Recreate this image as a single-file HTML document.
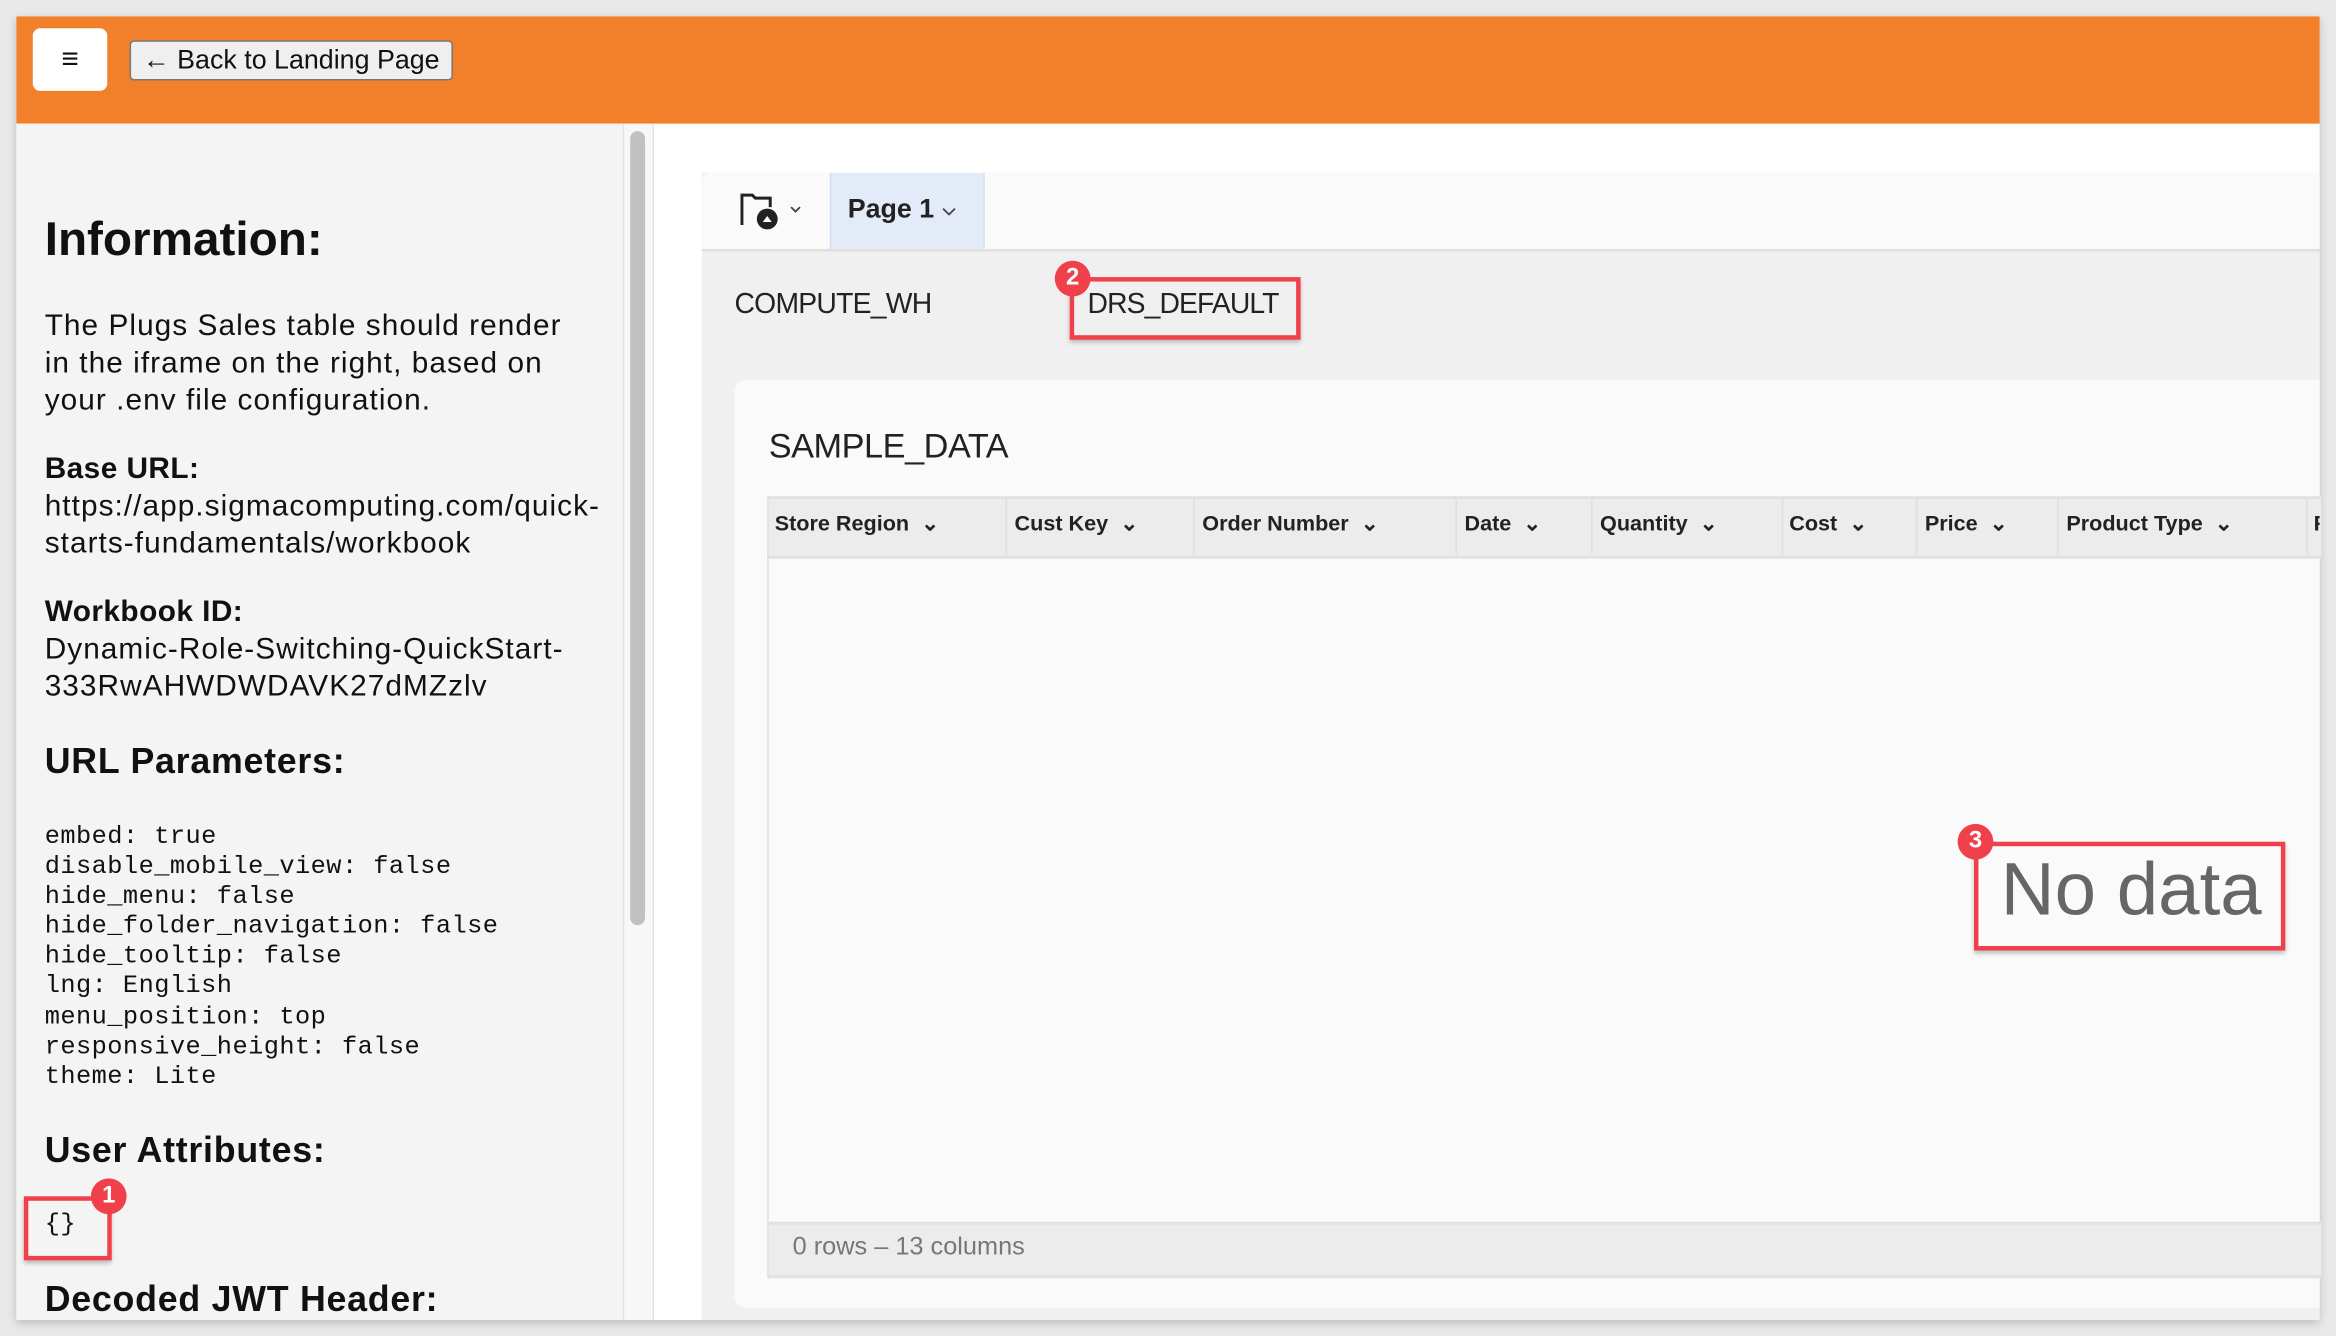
<!DOCTYPE html>
<html><head><meta charset="utf-8"><style>
html,body{margin:0;padding:0;width:2336px;height:1336px;overflow:hidden;background:#e9e9e9;}
#w{position:absolute;left:0;top:0;width:1568px;height:897px;transform:scale(1.4898);transform-origin:0 0;font-family:"Liberation Sans",sans-serif;color:#111;}
.a{position:absolute;white-space:nowrap;}
.mono{font-family:"Liberation Mono",monospace;font-size:17px;line-height:20.1px;letter-spacing:0.3px;}
.h{font-weight:bold;letter-spacing:0.5px;}
.p{font-size:20px;line-height:25px;letter-spacing:0.7px;}
.p b{letter-spacing:0.3px;}
.col{position:absolute;top:333px;height:39px;line-height:39px;font-size:14.5px;font-weight:bold;color:#222;}
.dv{position:absolute;top:334px;width:1px;height:38px;background:#dedede;}
.rb{position:absolute;border:3px solid #f0404c;box-shadow:0 2px 3px rgba(0,0,0,.25);}
.bd{position:absolute;width:24px;height:24px;border-radius:50%;background:#f0404c;color:#fff;font-weight:bold;font-size:16px;text-align:center;line-height:24px;}
</style></head><body><div id="w">
<div class="a" style="left:11px;top:11px;width:1546px;height:875px;background:#fff;box-shadow:0 2px 6px rgba(0,0,0,.2)"></div>
<div class="a" style="left:11px;top:11px;width:1546px;height:72px;background:#f2802a"></div>
<div class="a" style="left:22px;top:19px;width:50px;height:42px;background:#fff;border-radius:5px;text-align:center;line-height:42px;font-size:20px;font-weight:bold">≡</div>
<div class="a" style="left:87px;top:27px;width:217px;height:27px;background:#efefef;border:1px solid #777;border-radius:3px;box-sizing:border-box;font-size:18px;line-height:25px;text-align:center">← Back to Landing Page</div>
<div class="a" style="left:11px;top:83px;width:407px;height:803px;background:#f4f4f4"></div>
<div class="a" style="left:418px;top:83px;width:19px;height:803px;background:#f7f7f7;border-left:1px solid #e4e4e4;border-right:1px solid #e4e4e4"></div>
<div class="a" style="left:423px;top:88px;width:10px;height:533px;background:#c1c1c1;border-radius:5px"></div>
<div class="a h" style="left:30px;top:142px;font-size:32px;letter-spacing:0">Information:</div>
<div class="a p" style="left:30px;top:207px">The Plugs Sales table should render<br>in the iframe on the right, based on<br>your .env file configuration.</div>
<div class="a p" style="left:30px;top:303px"><b>Base URL:</b><br>https://app.sigmacomputing.com/quick-<br>starts-fundamentals/workbook</div>
<div class="a p" style="left:30px;top:399px"><b>Workbook ID:</b><br>Dynamic-Role-Switching-QuickStart-<br>333RwAHWDWDAVK27dMZzlv</div>
<div class="a h" style="left:30px;top:498px;font-size:24px">URL Parameters:</div>
<div class="a mono" style="left:30px;top:553px">embed: true<br>disable_mobile_view: false<br>hide_menu: false<br>hide_folder_navigation: false<br>hide_tooltip: false<br>lng: English<br>menu_position: top<br>responsive_height: false<br>theme: Lite</div>
<div class="a h" style="left:30px;top:759px;font-size:24px">User Attributes:</div>
<div class="a mono" style="left:30px;top:813px">{}</div>
<div class="rb" style="left:16px;top:803px;width:53px;height:37px"></div>
<div class="bd" style="left:61px;top:791px">1</div>
<div class="a h" style="left:30px;top:859px;font-size:24px;height:27px;overflow:hidden">Decoded JWT Header:</div>
<div class="a" style="left:471px;top:116px;width:1086px;height:770px;background:#f0f0f0"></div>
<div class="a" style="left:471px;top:116px;width:1086px;height:51px;background:#fafafa;border-bottom:2px solid #e0e0e0;border-radius:6px 0 0 0"></div>
<div class="a" style="left:557px;top:116px;width:102px;height:51px;background:#e3ebf9;border-left:1px solid #d6def0;border-right:1px solid #d6def0"></div>
<svg class="a" style="left:497px;top:129px" width="44" height="26" viewBox="0 0 44 26"><path d="M1 22V2h7l2 2h10v6" fill="none" stroke="#222" stroke-width="2"/><circle cx="18" cy="18" r="7" fill="#222"/><path d="M15 20l3-4 3 4z" fill="#fff"/><path d="M34 10l3 3 3-3" fill="none" stroke="#444" stroke-width="1.2"/></svg>
<div class="a" style="left:569px;top:130px;font-size:18px;font-weight:bold;color:#222">Page 1</div>
<svg class="a" style="left:632px;top:138px" width="10" height="8"><path d="M1 2l4 4 4-4" fill="none" stroke="#444" stroke-width="1.2"/></svg>
<div class="a" style="left:493px;top:194px;font-size:19px;color:#222;letter-spacing:-0.5px">COMPUTE_WH</div>
<div class="a" style="left:730px;top:194px;font-size:19px;color:#222;letter-spacing:-0.6px">DRS_DEFAULT</div>
<div class="rb" style="left:718px;top:186px;width:149px;height:36px"></div>
<div class="bd" style="left:708px;top:175px">2</div>
<div class="a" style="left:493px;top:255px;width:1064px;height:623px;background:#fafafa;border-radius:8px 0 0 8px"></div>
<div class="a" style="left:516px;top:286px;font-size:23px;color:#222;letter-spacing:-0.3px">SAMPLE_DATA</div>
<div class="a" style="left:515px;top:333px;width:1042px;height:38px;background:#ececec;border-top:2px solid #e2e2e2;border-bottom:2px solid #e2e2e2;border-left:1px solid #e0e0e0"></div>
<div class="a" style="left:515px;top:372px;width:1px;height:448px;background:#e0e0e0"></div>
<div class="col" style="left:520px">Store Region &nbsp;⌄</div>
<div class="dv" style="left:675px"></div><div class="col" style="left:681px">Cust Key &nbsp;⌄</div>
<div class="dv" style="left:801px"></div><div class="col" style="left:807px">Order Number &nbsp;⌄</div>
<div class="dv" style="left:977px"></div><div class="col" style="left:983px">Date &nbsp;⌄</div>
<div class="dv" style="left:1068px"></div><div class="col" style="left:1074px">Quantity &nbsp;⌄</div>
<div class="dv" style="left:1196px"></div><div class="col" style="left:1201px">Cost &nbsp;⌄</div>
<div class="dv" style="left:1286px"></div><div class="col" style="left:1292px">Price &nbsp;⌄</div>
<div class="dv" style="left:1381px"></div><div class="col" style="left:1387px">Product Type &nbsp;⌄</div>
<div class="dv" style="left:1548px"></div><div class="col" style="left:1553px;width:4px;overflow:hidden">F</div>
<div class="a" style="left:1343px;top:568px;font-size:50px;color:#666">No data</div>
<div class="rb" style="left:1325px;top:565px;width:203px;height:67px"></div>
<div class="bd" style="left:1314px;top:553px">3</div>
<div class="a" style="left:515px;top:820px;width:1042px;height:34px;background:#ececec;border-top:2px solid #e2e2e2;border-bottom:2px solid #e2e2e2;border-left:1px solid #e0e0e0"></div>
<div class="a" style="left:532px;top:827px;font-size:17px;color:#777">0 rows – 13 columns</div>
</div></body></html>
